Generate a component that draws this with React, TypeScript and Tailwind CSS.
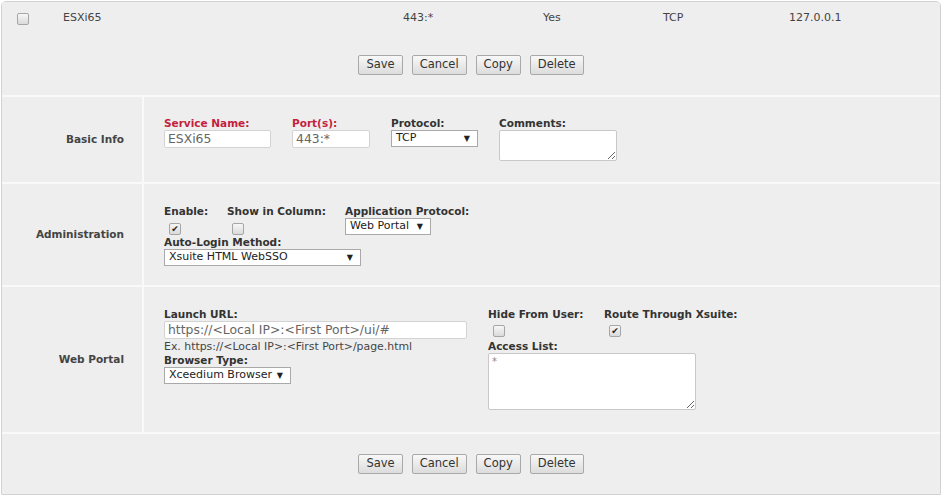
import React from "react";

const Checkbox = ({ checked = false }: { checked?: boolean }) => (
  <div className="w-[12px] h-[12px] border border-[#a6a6a6] rounded-[2px] bg-gradient-to-b from-[#f7f7f7] to-[#dadada] flex items-center justify-center text-[9px] leading-none text-[#222]">
    {checked ? "✔" : ""}
  </div>
);

const Btn = ({ children }: { children: React.ReactNode }) => (
  <button className="h-[20px] px-[7px] border border-[#a9a9a9] rounded-[2px] bg-gradient-to-b from-[#f8f8f8] to-[#dcdcdc] text-[11.5px] leading-none text-[#333] font-['DejaVu_Sans',sans-serif]">
    {children}
  </button>
);

const Buttons = () => (
  <div className="flex justify-center gap-[9px]">
    <Btn>Save</Btn>
    <Btn>Cancel</Btn>
    <Btn>Copy</Btn>
    <Btn>Delete</Btn>
  </div>
);

const Select = ({ value, w }: { value: string; w: string }) => (
  <div className={`${w} h-[17px] border border-[#a9a9a9] bg-white flex items-center justify-between pl-[4px] pr-[7px] text-[11px] text-[#222]`}>
    <span>{value}</span>
    <span className="text-[8px]">▼</span>
  </div>
);

const Input = ({ value, w }: { value: string; w: string }) => (
  <div className={`${w} h-[18px] border border-[#d3d3d3] rounded-[2px] bg-white px-[3px] flex items-center text-[12.4px] text-[#666] whitespace-nowrap overflow-hidden`}>
    {value}
  </div>
);

const Label = ({ children, red = false }: { children: React.ReactNode; red?: boolean }) => (
  <div className={`h-[13px] leading-[13px] text-[10.5px] font-bold whitespace-nowrap ${red ? "text-[#c41f3e]" : "text-[#333]"}`}>
    {children}
  </div>
);

const SectionLabel = ({ children }: { children: React.ReactNode }) => (
  <div className="w-[140px] shrink-0 bg-[#eeeeee] flex items-center justify-end pr-[18px] text-[10.5px] font-bold text-[#444]">
    {children}
  </div>
);

export default function App() {
  return (
    <div className="w-[946px] h-[498px] bg-white pt-[1px] pl-[1px] font-['DejaVu_Sans',sans-serif]">
      <div className="w-[940px] border border-[#d2d2d2] rounded-t-[5px] bg-[#f9f9f9] flex flex-col gap-[2px] overflow-hidden">
        {/* top row + buttons */}
        <div className="bg-[#eeeeee] h-[93px] flex flex-col">
          <div className="h-[33px] flex items-center text-[11px] text-[#444]">
            <div className="w-[61px] pl-[15px]">
              <Checkbox />
            </div>
            <div className="w-[340px]">ESXi65</div>
            <div className="w-[140px]">443:*</div>
            <div className="w-[120px]">Yes</div>
            <div className="w-[126px]">TCP</div>
            <div>127.0.0.1</div>
          </div>
          <div className="flex-1 flex items-center justify-center">
            <Buttons />
          </div>
        </div>

        {/* Basic Info */}
        <div className="h-[85px] flex gap-[2px]">
          <SectionLabel>Basic Info</SectionLabel>
          <div className="flex-1 bg-[#eeeeee] pt-[20px] pl-[20px] flex gap-[21px]">
            <div className="flex flex-col">
              <Label red>Service Name:</Label>
              <Input value="ESXi65" w="w-[107px]" />
            </div>
            <div className="flex flex-col">
              <Label red>Port(s):</Label>
              <Input value="443:*" w="w-[78px]" />
            </div>
            <div className="flex flex-col">
              <Label>Protocol:</Label>
              <Select value="TCP" w="w-[87px]" />
            </div>
            <div className="flex flex-col">
              <Label>Comments:</Label>
              <textarea className="w-[118px] h-[31px] border border-[#c8c8c8] rounded-[2px] bg-white text-[11px] text-[#666] outline-none" defaultValue="" />
            </div>
          </div>
        </div>

        {/* Administration */}
        <div className="h-[101px] flex gap-[2px]">
          <SectionLabel>Administration</SectionLabel>
          <div className="flex-1 bg-[#eeeeee] pt-[21px] pl-[20px] flex flex-col">
            <div className="flex h-[31px]">
              <div className="w-[63px] flex flex-col">
                <Label>Enable:</Label>
                <div className="pl-[5px] pt-[5px]">
                  <Checkbox checked />
                </div>
              </div>
              <div className="w-[118px] flex flex-col">
                <Label>Show in Column:</Label>
                <div className="pl-[5px] pt-[5px]">
                  <Checkbox />
                </div>
              </div>
              <div className="flex flex-col">
                <Label>Application Protocol:</Label>
                <Select value="Web Portal" w="w-[86px]" />
              </div>
            </div>
            <Label>Auto-Login Method:</Label>
            <Select value="Xsuite HTML WebSSO" w="w-[197px]" />
          </div>
        </div>

        {/* Web Portal */}
        <div className="h-[145px] flex gap-[2px]">
          <SectionLabel>Web Portal</SectionLabel>
          <div className="flex-1 bg-[#eeeeee] pt-[21px] pl-[20px] flex gap-[21px]">
            <div className="flex flex-col w-[303px]">
              <Label>Launch URL:</Label>
              <Input value="https://<Local IP>:<First Port>/ui/#" w="w-[303px]" />
              <div className="h-[14px] leading-[14px] mt-[1px] text-[10.9px] text-[#444] whitespace-nowrap">
                Ex. https://&lt;Local IP&gt;:&lt;First Port&gt;/page.html
              </div>
              <Label>Browser Type:</Label>
              <Select value="Xceedium Browser" w="w-[127px]" />
            </div>
            <div className="flex flex-col">
              <div className="flex h-[32px]">
                <div className="w-[116px] flex flex-col">
                  <Label>Hide From User:</Label>
                  <div className="pl-[5px] pt-[4px]">
                    <Checkbox />
                  </div>
                </div>
                <div className="flex flex-col">
                  <Label>Route Through Xsuite:</Label>
                  <div className="pl-[5px] pt-[4px]">
                    <Checkbox checked />
                  </div>
                </div>
              </div>
              <Label>Access List:</Label>
              <textarea className="w-[208px] h-[57px] border border-[#c8c8c8] rounded-[2px] bg-white text-[10px] leading-[12px] text-[#888] px-[3px] pt-[2px] outline-none resize" defaultValue="*" />
            </div>
          </div>
        </div>

        {/* bottom buttons */}
        <div className="h-[60px] bg-[#eeeeee] flex items-center justify-center">
          <Buttons />
        </div>
      </div>
    </div>
  );
}
